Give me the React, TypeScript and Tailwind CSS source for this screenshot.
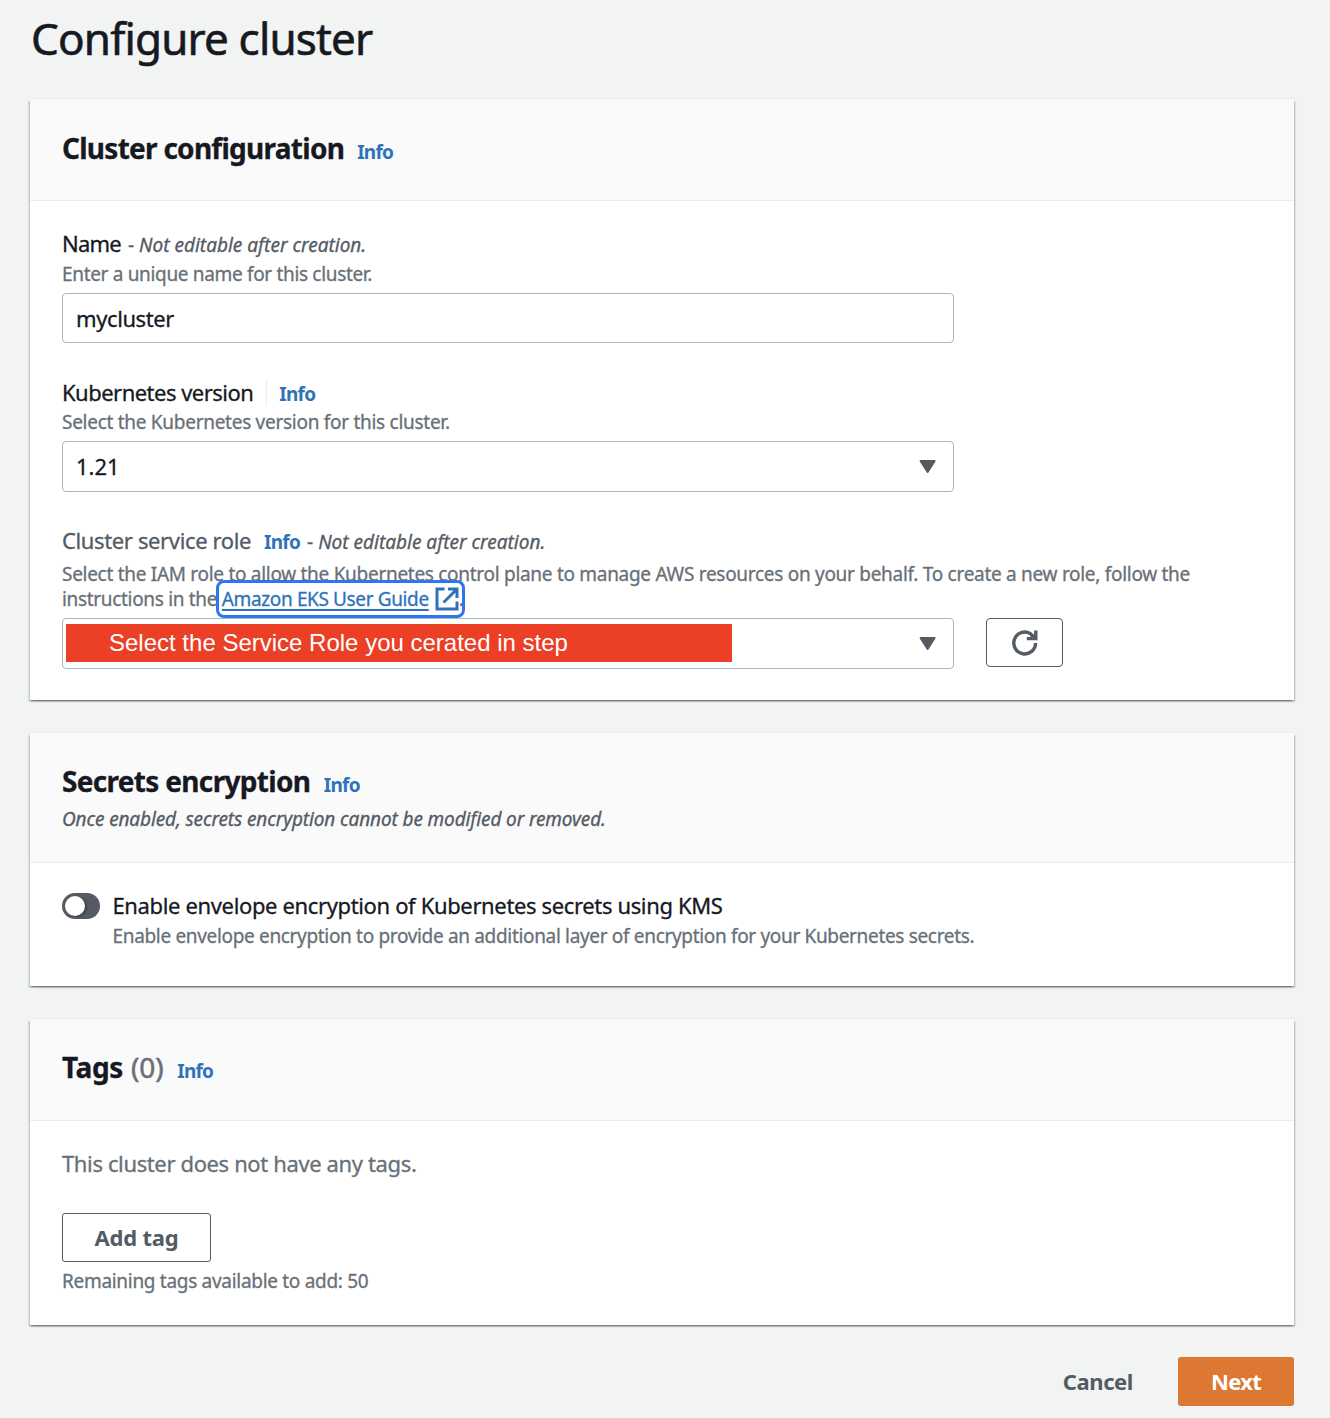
import type { ReactNode } from "react";

function Info({ className = "" }: { className?: string }) {
  return (
    <a href="#" className={`text-[19px] font-bold tracking-[-0.74px] text-[#2e73b8] [-webkit-text-stroke:0px] ${className}`}>
      Info
    </a>
  );
}

function Card({ className, headerClass, header, children }: { className: string; headerClass: string; header: ReactNode; children: ReactNode }) {
  return (
    <section
      className={`bg-white shadow-[0_1.6px_1.6px_0_rgba(0,28,36,0.35),1.6px_1.6px_1.6px_0_rgba(0,28,36,0.15),-1.6px_1.6px_1.6px_0_rgba(0,28,36,0.15)] ${className}`}
    >
      <header className={`border-b border-[#eaeded] bg-[#fafafa] px-8 shadow-[0_-1px_0_0_#eaeded] ${headerClass}`}>{header}</header>
      <div className="px-8">{children}</div>
    </section>
  );
}

function Caret() {
  return (
    <svg width="18" height="15" viewBox="0 0 18 15" className="shrink-0">
      <path d="M1.6 2h14L8.6 13z" fill="#545b64" stroke="#545b64" strokeWidth="2" strokeLinejoin="round" />
    </svg>
  );
}

function ExternalIcon() {
  return (
    <svg width="24" height="24" viewBox="0 0 24 24" fill="none" stroke="#2e73b8" strokeWidth="3" className="ml-[6px] inline-block align-[-5px]">
      <path d="M9.5 2H2v20h20v-7.5" />
      <path d="M13 2h9v9M21.5 2.5L8.5 15.5" />
    </svg>
  );
}

const label = "h-[30px] text-[22px] leading-[28px]";
const hint = "text-[19px] leading-[25px] text-[#687078]";
const note = "text-[19px] text-[#545b64]";
const field = "flex w-[892px] rounded-[4px] border border-[#aab7b8] bg-white";

export default function App() {
  return (
    <main className="h-[1418px] w-[1330px] overflow-hidden bg-[#f2f3f3] pr-9 pl-[30px] pt-[10px] font-['Noto_Sans',sans-serif] whitespace-nowrap text-[#16191f] [-webkit-text-stroke:0.3px]">
      <h1 className="ml-px h-14 text-[44px] leading-[56px] tracking-[-0.83px] [-webkit-text-stroke:0.6px]">Configure cluster</h1>

      <Card
        className="mt-[33px] h-[601px]"
        headerClass="h-[102px] pt-[29px]"
        header={
          <h2 className="text-[28px] leading-10 font-bold tracking-[-0.73px]">
            Cluster configuration
            <Info className="ml-[13px]" />
          </h2>
        }
      >
        <div className="pt-7">
          <div className={label}>
            <span className="tracking-[-0.76px]">Name</span>
            <span className={`${note} ml-[7px]`}>
              - <i>Not editable after creation.</i>
            </span>
          </div>
          <p className={`${hint} mt-[3px] tracking-[-0.33px]`}>Enter a unique name for this cluster.</p>
          <div className={`${field} mt-[6px] h-[50px] items-center px-[13px] text-[22px] tracking-[-0.4px]`}>mycluster</div>
        </div>

        <div className="pt-[35px]">
          <div className={`${label} flex`}>
            <span className="tracking-[-0.52px]">Kubernetes version</span>
            <span className="mt-[2px] ml-[13px] h-[26px] w-px bg-[#eaeded]" />
            <Info className="mt-[2px] ml-[12px]" />
          </div>
          <p className={`${hint} mt-[2px] tracking-[-0.28px]`}>Select the Kubernetes version for this cluster.</p>
          <div className={`${field} mt-[6px] h-[51px] items-center justify-between pr-[16px] pl-[13px] text-[22px] tracking-normal`}>
            <span>1.21</span>
            <Caret />
          </div>
        </div>

        <div className="pt-[34px]">
          <div className={label}>
            <span className="tracking-[-0.37px] text-[#545b64]">Cluster service role</span>
            <Info className="ml-[13px]" />
            <span className={`${note} ml-[7px]`}>
              - <i>Not editable after creation.</i>
            </span>
          </div>
          <p className={`${hint} mt-[6px] tracking-[-0.29px]`}>
            Select the IAM role to allow the Kubernetes control plane to manage AWS resources on your behalf. To create a new role, follow the
            <br />
            <span className="tracking-[-0.32px]">instructions in the </span>
            <span className="relative inline-block h-[25px] align-top">
              <a href="#" className="tracking-[-0.37px] text-[#2e73b8] underline decoration-[1.5px] underline-offset-[3px]">
                Amazon EKS User Guide
              </a>
              <ExternalIcon />
              <span className="absolute -top-[7px] -left-[6px] h-[38px] w-[249px] rounded-[8px] border-[3px] border-[#2f74f0]" />
            </span>
            .
          </p>
          <div className="mt-[6px] flex items-start">
            <div className={`${field} h-[51px] items-center justify-between pr-[16px] pl-[3px]`}>
              <div className="mb-[2px] h-[38px] w-[666px] bg-[#eb4026] pl-[43px] font-['Liberation_Sans',Arial,sans-serif] text-[24px] leading-[38px] text-white [-webkit-text-stroke:0px]">
                Select the Service Role you cerated in step
              </div>
              <Caret />
            </div>
            <button className="ml-8 flex h-[49px] w-[77px] items-center justify-center rounded-[4px] border border-[#545b64] bg-white">
              <svg width="28" height="28" viewBox="0 0 28 28" fill="none" stroke="#545b64" strokeWidth="3.4">
                <path d="M24.6 14A10.9 10.9 0 1 1 19.5 4.8L23 8" />
                <path d="M24.8 1.4v8.2h-9" />
                <path d="M19.5 6.5h4v3h-4z" fill="#545b64" stroke="none" />
              </svg>
            </button>
          </div>
        </div>
      </Card>

      <Card
        className="mt-[33px] h-[253px]"
        headerClass="h-[130px] pt-7"
        header={
          <>
            <h2 className="text-[28px] leading-10 font-bold tracking-[-0.68px]">
              Secrets encryption
              <Info className="ml-[13.5px]" />
            </h2>
            <p className={`${note} mt-[2px] leading-[25px] tracking-[-0.12px] italic`}>Once enabled, secrets encryption cannot be modified or removed.</p>
          </>
        }
      >
        <div className="flex pt-7">
          <span className="mt-[2px] flex h-[26px] w-[38px] items-center rounded-full bg-[#545b64] pl-[3px]">
            <span className="size-[20px] rounded-full bg-white shadow-[2px_1px_2px_rgba(0,0,0,0.3)]" />
          </span>
          <div className="ml-[12.5px]">
            <div className={`${label} tracking-[-0.36px]`}>Enable envelope encryption of Kubernetes secrets using KMS</div>
            <p className={`${hint} mt-[3px] tracking-[-0.33px]`}>
              Enable envelope encryption to provide an additional layer of encryption for your Kubernetes secrets.
            </p>
          </div>
        </div>
      </Card>

      <Card
        className="mt-[33px] h-[306px]"
        headerClass="h-[102px] pt-7"
        header={
          <h2 className="text-[28px] leading-10 font-bold tracking-[-0.36px]">
            Tags <span className="ml-px font-normal tracking-normal text-[#687078] [-webkit-text-stroke:0.5px]">(0)</span>
            <Info className="ml-[13.5px]" />
          </h2>
        }
      >
        <div className="pt-7">
          <p className={`${label} tracking-[-0.37px] text-[#687078]`}>This cluster does not have any tags.</p>
          <button className="mt-[34px] flex h-[49px] w-[149px] items-center justify-center rounded-[3px] border border-[#545b64] bg-white text-[22px] font-bold tracking-[-0.2px] text-[#545b64] [-webkit-text-stroke:0px]">
            Add tag
          </button>
          <p className={`${hint} mt-[7px] tracking-[-0.3px]`}>Remaining tags available to add: 50</p>
        </div>
      </Card>

      <footer className="mt-8 flex justify-end text-[22px] font-bold [-webkit-text-stroke:0px]">
        <button className="mr-[45px] h-[49px] tracking-[-0.4px] text-[#545b64]">Cancel</button>
        <button className="h-[49px] w-[116px] rounded-[3px] bg-[#dd7731] tracking-[-0.7px] text-white">Next</button>
      </footer>
    </main>
  );
}
